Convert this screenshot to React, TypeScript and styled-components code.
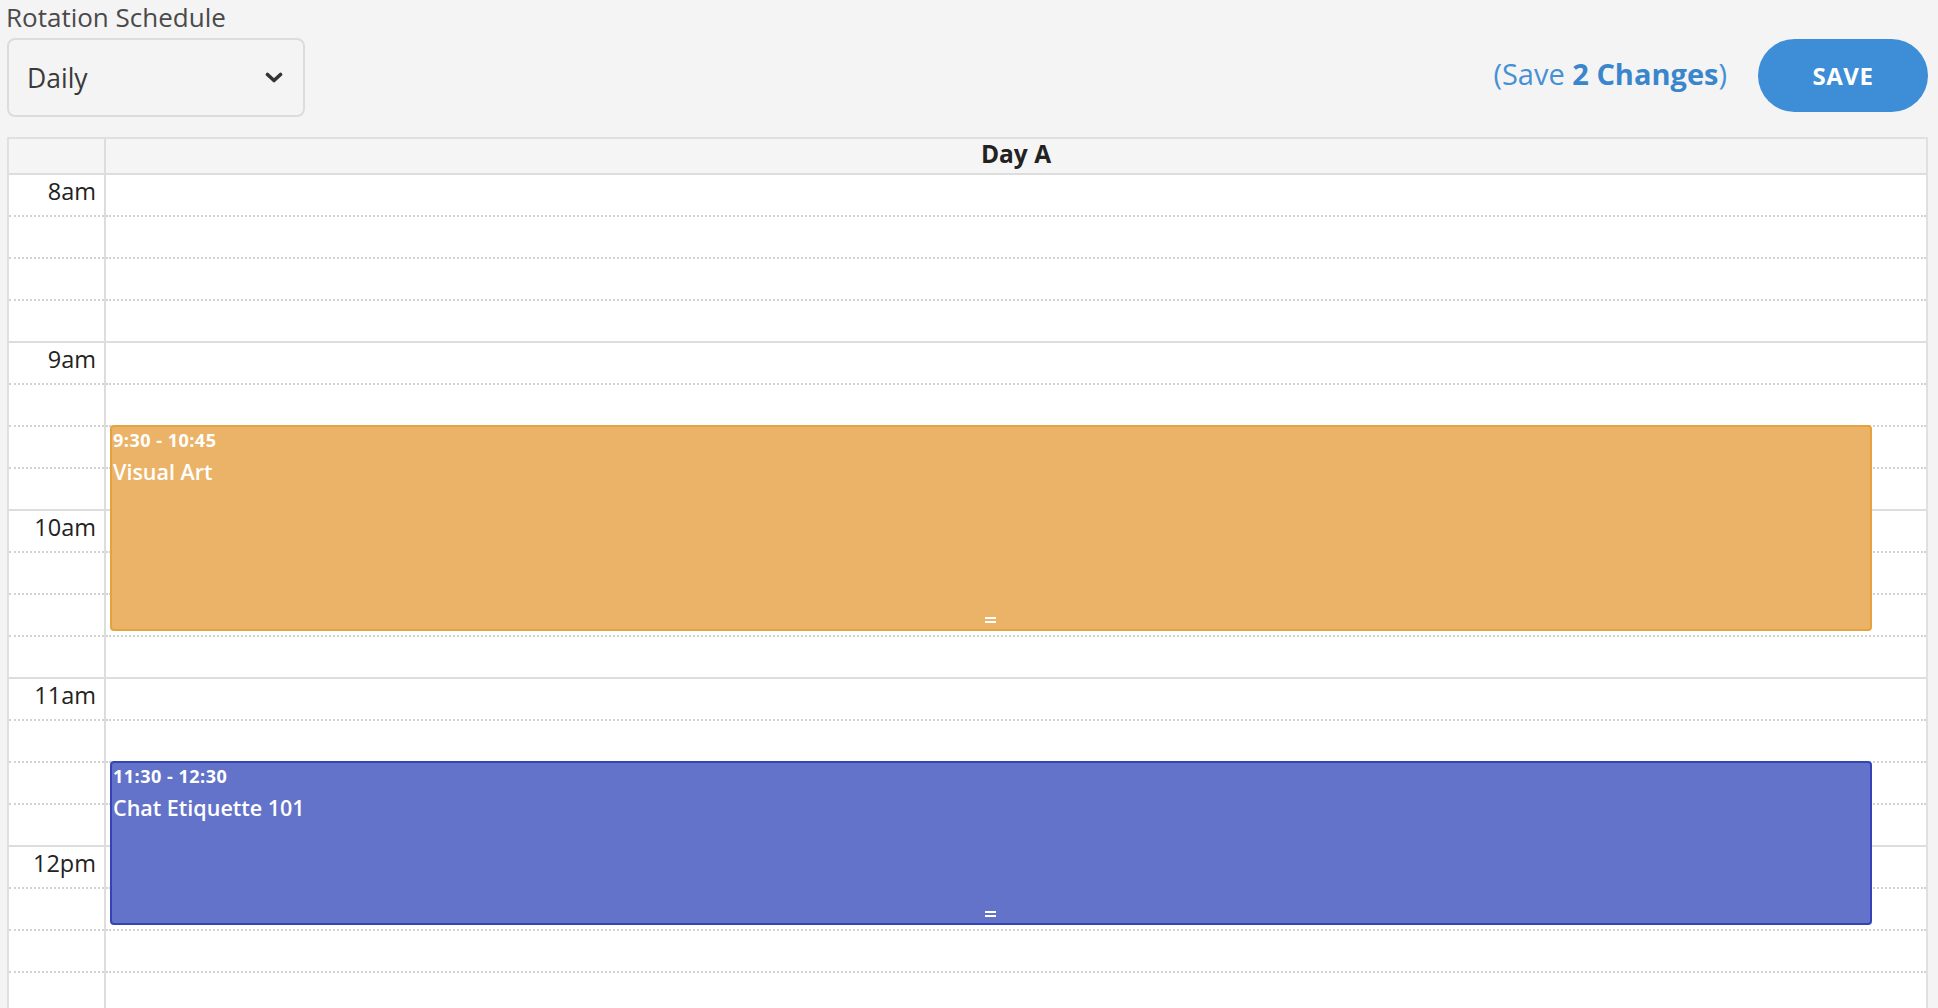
import React from "react";
import styled, { createGlobalStyle } from "styled-components";

const GlobalStyle = createGlobalStyle`
  html, body {
    margin: 0;
    padding: 0;
    background: #f4f4f4;
    overflow: hidden;
  }
  * { box-sizing: border-box; }
`;

const HOUR = 168;
const SLOT = HOUR / 4;
const FONT = `"Open Sans", Lato, sans-serif`;

const Page = styled.div`
  height: 100vh;
  overflow: hidden;
  padding: 0 10px 0 7px;
  font-family: ${FONT};
  background: #f4f4f4;
`;

const TopBar = styled.div`
  display: flex;
  align-items: flex-end;
  justify-content: space-between;
`;

const FieldGroup = styled.div`
  display: flex;
  flex-direction: column;
`;

const FieldLabel = styled.div`
  font-size: 26px;
  line-height: 35px;
  color: #4a4a4a;
  margin-left: -1px;
`;

const Select = styled.div`
  margin-top: 3px;
  width: 298px;
  height: 79px;
  border: 2px solid #dcdcdc;
  border-radius: 8px;
  display: flex;
  align-items: center;
  justify-content: space-between;
  padding: 0 20px 0 18px;
  font-size: 26.5px;
  color: #3a3a3a;
`;

const Actions = styled.div`
  height: 79px;
  display: flex;
  align-items: center;
  gap: 31px;
`;

const ChangesLink = styled.span`
  font-size: 29px;
  color: #4690d4;
  margin-bottom: 8px;
  b {
    font-weight: 700;
    color: #3a86cc;
  }
`;

const SaveButton = styled.button`
  width: 170px;
  height: 73px;
  border: none;
  border-radius: 37px;
  background: #3d8ed6;
  color: #fff;
  font-family: ${FONT};
  font-weight: 700;
  font-size: 24px;
  letter-spacing: 0.5px;
  margin-bottom: 4px;
`;

const Calendar = styled.div`
  margin-top: 20px;
  border: 2px solid #e0e0e0;
  border-bottom: none;
  background: #fff;
  display: grid;
  grid-template-columns: 95px 2px 1fr;
`;

const HeaderCell = styled.div`
  height: 36px;
  padding-bottom: 5px;
  background: #f5f5f5;
  border-bottom: 2px solid #dddddd;
  display: flex;
  align-items: center;
  justify-content: center;
  font-size: 24.5px;
  font-weight: 700;
  color: #222;
`;

const Divider = styled.div`
  background: #dddddd;
`;

const Column = styled.div`
  display: flex;
  flex-direction: column;
  position: relative;
`;

const Slot = styled.div<{ $hourEnd: boolean }>`
  height: ${SLOT}px;
  flex: none;
  border-bottom: 2px ${(p) => (p.$hourEnd ? "solid #dddddd" : "dotted #d2d2d2")};
`;

const TimeLabel = styled.div`
  text-align: right;
  padding: 2px 8px 0 0;
  font-size: 23.5px;
  line-height: 28px;
  color: #222;
`;

const Event = styled.div<{ $bg: string; $border: string }>`
  position: absolute;
  left: 4px;
  right: 54px;
  background: ${(p) => p.$bg};
  border: 2px solid ${(p) => p.$border};
  border-radius: 4px;
  color: #fff;
  padding: 3px 1px;
`;

const EventTime = styled.div`
  font-size: 18px;
  line-height: 20px;
  font-weight: 700;
  letter-spacing: 0.5px;
`;

const EventTitle = styled.div`
  margin-top: 9px;
  font-size: 21.5px;
  line-height: 26px;
  font-weight: 600;
`;

const Handle = styled.div`
  position: absolute;
  left: 50%;
  bottom: 6px;
  width: 11px;
  height: 6px;
  margin-left: -6px;
  border-top: 2px solid #fff;
  border-bottom: 2px solid #fff;
`;

const hours = ["8am", "9am", "10am", "11am", "12pm"];

const events = [
  { start: 9.5, end: 10.75, label: "9:30 - 10:45", title: "Visual Art", bg: "#ebb367", border: "#e7a240" },
  { start: 11.5, end: 12.5, label: "11:30 - 12:30", title: "Chat Etiquette 101", bg: "#6373c9", border: "#3444b6" },
];

const Chevron = () => (
  <svg width="18" height="11" viewBox="0 0 18 11">
    <polyline points="2.5,2.5 9,8.5 15.5,2.5" fill="none" stroke="#333" strokeWidth="3.6" strokeLinecap="round" strokeLinejoin="round" />
  </svg>
);

export default function App() {
  const slots = hours.flatMap((h) => [0, 1, 2, 3].map((q) => ({ h, q })));
  return (
    <>
      <GlobalStyle />
      <Page>
        <TopBar>
          <FieldGroup>
            <FieldLabel>Rotation Schedule</FieldLabel>
            <Select>
              <span>Daily</span>
              <Chevron />
            </Select>
          </FieldGroup>
          <Actions>
            <ChangesLink>
              (Save <b>2 Changes</b>)
            </ChangesLink>
            <SaveButton>SAVE</SaveButton>
          </Actions>
        </TopBar>
        <Calendar>
          <HeaderCell />
          <Divider />
          <HeaderCell>Day A</HeaderCell>
          <Column>
            {slots.map(({ h, q }) => (
              <Slot key={h + q} $hourEnd={q === 3}>
                {q === 0 && <TimeLabel>{h}</TimeLabel>}
              </Slot>
            ))}
          </Column>
          <Divider />
          <Column>
            {slots.map(({ h, q }) => (
              <Slot key={h + q} $hourEnd={q === 3} />
            ))}
            {events.map((e) => (
              <Event
                key={e.title}
                $bg={e.bg}
                $border={e.border}
                style={{ top: (e.start - 8) * HOUR - 2, height: (e.end - e.start) * HOUR - 4 }}
              >
                <EventTime>{e.label}</EventTime>
                <EventTitle>{e.title}</EventTitle>
                <Handle />
              </Event>
            ))}
          </Column>
        </Calendar>
      </Page>
    </>
  );
}
